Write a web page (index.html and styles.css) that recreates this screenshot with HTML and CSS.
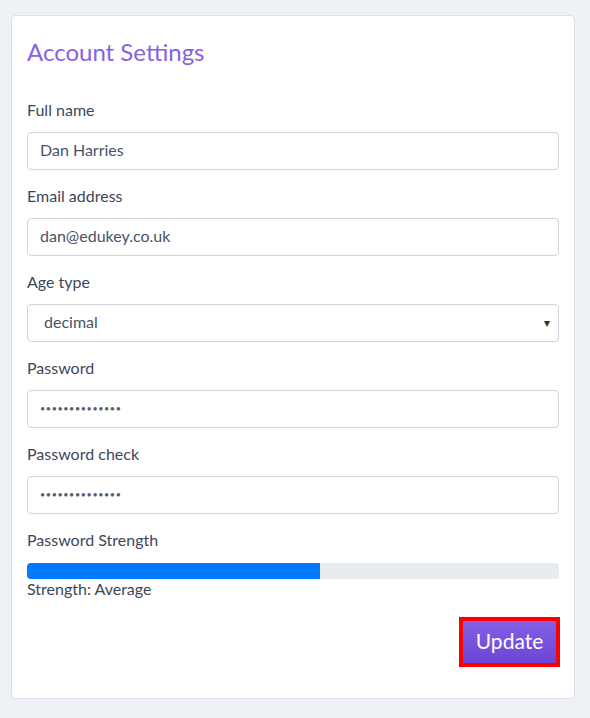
FILE: index.html
```html
<!DOCTYPE html>
<html lang="en">
<head>
<meta charset="utf-8">
<title>Account Settings</title>
<link rel="stylesheet" href="styles.css">
</head>
<body>
<div class="card">
  <h1 class="title">Account Settings</h1>
  <div class="group">
    <label class="label">Full name</label>
    <div class="input">Dan Harries</div>
  </div>
  <div class="group">
    <label class="label">Email address</label>
    <div class="input">dan@edukey.co.uk</div>
  </div>
  <div class="group">
    <label class="label">Age type</label>
    <div class="input select"><span>decimal</span><span class="caret">▾</span></div>
  </div>
  <div class="group">
    <label class="label">Password</label>
    <div class="input dots">••••••••••••••</div>
  </div>
  <div class="group">
    <label class="label">Password check</label>
    <div class="input dots">••••••••••••••</div>
  </div>
  <div class="strength">
    <label class="label">Password Strength</label>
    <div class="bar"><div class="fill" style="width:55%"></div></div>
    <div class="strength-text">Strength: Average</div>
  </div>
  <div class="actions">
    <button class="btn">Update</button>
  </div>
</div>
</body>
</html>
```
FILE: styles.css
```css
html, body {
  margin: 0;
  padding: 0;
  background: #eef1f5;
}
body {
  padding: 15px 15px 20px 11px;
  font-family: Lato, "Open Sans", sans-serif;
  color: #3d4759;
}
.card {
  width: 532px;
  background: #fff;
  border: 1px solid #dde0e4;
  border-radius: 4px;
  padding: 15px;
}
.title {
  margin: 8px 0 35px 0;
  font-size: 24px;
  line-height: 26px;
  font-weight: 400;
  color: #8762e4;
}
.group {
  margin-bottom: 16px;
}
.label {
  display: block;
  font-size: 16px;
  line-height: 20px;
  margin-bottom: 12px;
  color: #3d4759;
}
.input {
  box-sizing: border-box;
  height: 38px;
  border: 1px solid #cfd4dc;
  border-radius: 4px;
  padding: 0 12px;
  font-size: 16px;
  line-height: 33px;
  color: #4a5366;
}
.select {
  display: flex;
  justify-content: space-between;
  padding: 0 8px 0 16px;
}
.caret {
  font-size: 12px;
  line-height: 36px;
  color: #333;
}
.dots {
  font-size: 9px;
  line-height: 36px;
  letter-spacing: 0.6px;
  color: #555d6e;
}
.strength .label {
  margin-bottom: 13px;
}
.bar {
  height: 16px;
  background: #e9ecef;
  border-radius: 4px;
  overflow: hidden;
}
.fill {
  height: 100%;
  background: #007bff;
}
.strength-text {
  font-size: 16px;
  line-height: 19px;
}
.actions {
  display: flex;
  justify-content: flex-end;
  margin-top: 19px;
  margin-bottom: 16px;
  margin-right: -1px;
}
.btn {
  box-sizing: border-box;
  width: 101px;
  height: 50px;
  border: 4px solid #ff0000;
  background: linear-gradient(#8461e6, #6b44d6);
  color: #fff;
  font-family: Lato, "Open Sans", sans-serif;
  font-size: 21px;
  line-height: 38px;
  padding: 0 0 2px 0;
}
```
